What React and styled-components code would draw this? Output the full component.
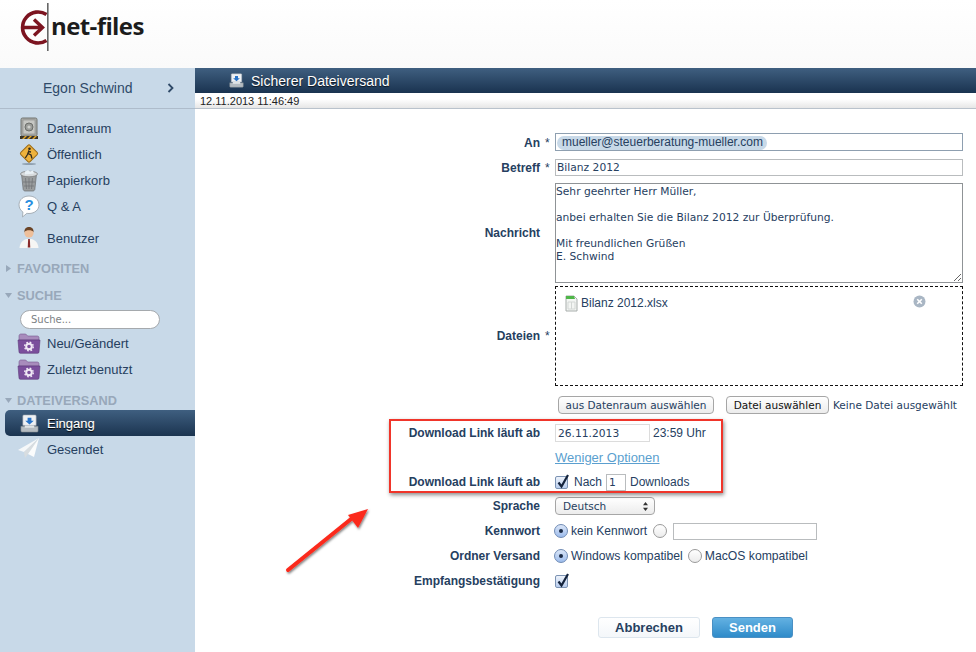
import React from "react";
import styled, { createGlobalStyle } from "styled-components";

const GlobalStyle = createGlobalStyle`
  html, body { margin: 0; padding: 0; background: #fff; }
  body { font-family: "Liberation Sans", Arial, sans-serif; color: #26405f; }
  * { box-sizing: border-box; }
`;

const Page = styled.div`
  width: 976px;
  height: 652px;
  overflow: hidden;
  display: flex;
  flex-direction: column;
  position: relative;
`;

const Header = styled.header`
  height: 68px;
  flex: none;
  background: linear-gradient(#ffffff, #fafafa);
  padding: 3px 0 0 20px;
`;

const LogoWrap = styled.div`
  display: flex;
  align-items: flex-start;
  height: 48px;
`;

const LogoText = styled.span`
  font-family: "Open Sans", sans-serif;
  font-weight: 700;
  font-size: 24px;
  letter-spacing: -0.6px;
  line-height: 46px;
  color: #1c1c1c;
  margin-left: 1px;
`;

const Body = styled.div`
  flex: 1;
  display: flex;
  min-height: 0;
`;

const Sidebar = styled.aside`
  width: 195px;
  flex: none;
  background: #c8d9e8;
  display: flex;
  flex-direction: column;
`;

const UserBar = styled.div`
  height: 41px;
  border-bottom: 1px solid #aebccb;
  display: flex;
  align-items: center;
  padding: 0 0 0 43px;
  font-size: 14px;
  color: #2f4a68;
  margin-bottom: 6px;
`;

const UserName = styled.span`
  width: 124px;
`;

const NavItem = styled.div`
  height: ${(p) => p.$h || 26}px;
  margin-top: ${(p) => p.$mt || 0}px;
  margin-left: 5px;
  padding-left: 13px;
  display: flex;
  align-items: center;
  gap: 7px;
  font-size: 13px;
  color: ${(p) => (p.$active ? "#fff" : "#26405f")};
  text-shadow: ${(p) => (p.$active ? "0 1px 1px #000, 0 0 1px rgba(255,255,255,.6)" : "none")};
  border-radius: ${(p) => (p.$active ? "5px 0 0 5px" : "0")};
  background: ${(p) => (p.$active ? "linear-gradient(#3f5f80, #1b3450)" : "none")};
`;

const NavIcon = styled.span`
  width: 22px;
  flex: none;
  display: flex;
  justify-content: center;
  svg { flex: none; }
`;

const SectionHead = styled.div`
  display: flex;
  align-items: center;
  height: 16px;
  margin-top: ${(p) => p.$mt}px;
  padding-left: 5px;
  gap: 5px;
  font-size: 12.8px;
  font-weight: 700;
  color: #98a8ba;
`;

const SearchBox = styled.input`
  display: block;
  width: 140px;
  height: 19px;
  margin: 7px 0 1px 20px;
  border: 1px solid #a5a9ad;
  border-radius: 10px;
  background: #fff;
  padding: 0 10px;
  font-family: "DejaVu Sans", sans-serif;
  font-size: 10px;
  outline: none;
  &::placeholder { color: #7c8184; opacity: 1; }
`;

const Main = styled.main`
  flex: 1;
  min-width: 0;
  position: relative;
  display: flex;
  flex-direction: column;
`;

const TitleBar = styled.div`
  height: 25px;
  flex: none;
  background: linear-gradient(#3f5f80, #1a3350);
  color: #fff;
  display: flex;
  align-items: center;
  gap: 7px;
  padding-left: 34px;
  font-size: 14px;
  text-shadow: 0 1px 1px rgba(0, 0, 0, 0.7);
`;

const DateBar = styled.div`
  height: 16px;
  flex: none;
  background: linear-gradient(#fff 40%, #e6e6e6);
  border-bottom: 1px solid #b9c2cc;
  padding-left: 5px;
  font-size: 11px;
  line-height: 16px;
  color: #222;
`;

const Form = styled.form`
  padding-top: 24px;
  display: flex;
  flex-direction: column;
`;

const Row = styled.div`
  display: flex;
  align-items: center;
  height: ${(p) => p.$h || 18}px;
  margin-top: ${(p) => p.$mt || 0}px;
`;

const Label = styled.div`
  width: 345px;
  flex: none;
  text-align: right;
  font-size: 12px;
  font-weight: 700;
  color: #26405f;
`;

const Star = styled.div`
  width: 15px;
  flex: none;
  padding-left: 5px;
  font-size: 12px;
  color: #26405f;
`;

const Field = styled.div`
  flex: 1;
  display: flex;
  align-items: ${(p) => p.$align || "center"};
  height: 100%;
  font-size: 12px;
  color: #26405f;
`;

const ToField = styled.div`
  width: 408px;
  height: 18px;
  border: 1px solid #8e9fb0;
  padding: 1px 0 0 1px;
`;

const Chip = styled.span`
  display: inline-block;
  height: 14px;
  line-height: 13px;
  padding: 0 4px 0 5px;
  border-radius: 7px;
  background: #c8d9e8;
  font-size: 12px;
  color: #26405f;
`;

const TextInput = styled.input`
  width: ${(p) => p.$w}px;
  height: ${(p) => p.$h || 18}px;
  border: 1px solid ${(p) => p.$line || "#c4c7c9"};
  background: #fff;
  padding: 0 ${(p) => p.$pad ?? 1}px;
  margin: ${(p) => p.$m || 0};
  font-family: "DejaVu Sans", sans-serif;
  font-size: 10.7px;
  color: #26405f;
  outline: none;
`;

const Message = styled.textarea`
  width: 408px;
  height: 100px;
  border: 1px solid #8f9396;
  padding: 1px 0 0 0;
  font-family: "DejaVu Sans", sans-serif;
  font-size: 10.7px;
  line-height: 13px;
  color: #26405f;
  outline: none;
  resize: both;
  overflow: hidden;
`;

const DropZone = styled.div`
  width: 408px;
  height: 100px;
  border: 1px dashed #111;
  padding: 8px 0 0 9px;
  display: flex;
  align-items: flex-start;
  font-size: 12px;
  color: #26405f;
`;

const FileName = styled.span`
  margin-left: 3px;
  line-height: 17px;
  width: 332px;
`;

const MacButton = styled.button`
  height: 18px;
  width: ${(p) => p.$w}px;
  margin: ${(p) => p.$m || 0};
  padding: 0;
  border: 1px solid #a6a6a6;
  border-radius: 4px;
  background: linear-gradient(#fff, #ececec);
  font-family: "DejaVu Sans", sans-serif;
  font-size: 10.5px;
  color: ${(p) => p.$c || "#26405f"};
`;

const SmallText = styled.span`
  font-family: "DejaVu Sans", sans-serif;
  font-size: 10.5px;
  color: #26405f;
  margin: ${(p) => p.$m || 0};
`;

const PlainText = styled.span`
  font-size: ${(p) => p.$s || 12}px;
  color: #26405f;
  margin: ${(p) => p.$m || 0};
`;

const MoreLink = styled.a`
  font-size: 13px;
  color: #5b9fcf;
  text-decoration: underline;
`;

const CheckBox = styled.span`
  width: 13px;
  height: 13px;
  flex: none;
  position: relative;
  display: inline-block;
  border: 1px solid #7c93b3;
  border-radius: 2px;
  background: linear-gradient(#eef3fb, #b8cdee);
  svg { position: absolute; left: -1px; top: -4px; }
`;

const Radio = styled.span`
  width: 14px;
  height: 14px;
  flex: none;
  display: inline-flex;
  align-items: center;
  justify-content: center;
  margin: ${(p) => p.$m || 0};
  border-radius: 50%;
  border: 1px solid ${(p) => (p.$on ? "#6f8bb5" : "#9a9a9a")};
  background: ${(p) => (p.$on ? "linear-gradient(#dbe6f7, #9dbcec)" : "linear-gradient(#fff, #ececec)")};
  &::after {
    content: "";
    display: ${(p) => (p.$on ? "block" : "none")};
    width: 4px;
    height: 4px;
    border-radius: 50%;
    background: #1b2b45;
  }
`;

const SelectBox = styled.div`
  width: 100px;
  height: 18px;
  border: 1px solid #a6a6a6;
  border-radius: 4px;
  background: linear-gradient(#fff, #ececec);
  display: flex;
  align-items: center;
  justify-content: space-between;
  padding: 0 5px 0 7px;
  font-family: "DejaVu Sans", sans-serif;
  font-size: 10.5px;
  color: #26405f;
`;

const Actions = styled.div`
  display: flex;
  gap: 12px;
  margin: 27px 0 0 403px;
`;

const ActionButton = styled.button`
  width: ${(p) => p.$w}px;
  height: 21px;
  padding: 0;
  border-radius: 3px;
  border: 1px solid ${(p) => (p.$primary ? "#4a90c4" : "#dde6ee")};
  background: ${(p) => (p.$primary ? "linear-gradient(#63b1e2, #2f8bc9)" : "linear-gradient(#fff, #f4f7fa)")};
  color: ${(p) => (p.$primary ? "#fff" : "#26405f")};
  font-family: "Liberation Sans", sans-serif;
  font-size: 13px;
  font-weight: 700;
`;

const Highlight = styled.div`
  position: absolute;
  left: 194px;
  top: 351px;
  width: 334px;
  height: 74px;
  border: 2px solid #f0352a;
  box-shadow: 1px 2px 4px rgba(0, 0, 0, 0.45);
  pointer-events: none;
`;

const ArrowMark = styled.svg`
  position: absolute;
  left: 85px;
  top: 436px;
`;

const Logo = () => (
  <svg width="30" height="48" viewBox="0 0 30 48">
    <path d="M26.5 11.5A15.5 15.5 0 1 0 26.5 37.5" fill="none" stroke="#7c1420" strokeWidth="3.6" />
    <path d="M4 24.5h17M14 16.5l8.5 8-8.5 8" fill="none" stroke="#7c1420" strokeWidth="3.4" />
    <rect x="27" y="0" width="1.6" height="48" fill="#666" />
  </svg>
);

const SafeIcon = () => (
  <svg width="20" height="23" viewBox="0 0 20 23">
    <rect x="2" y="1" width="16" height="18" rx="1.5" fill="#a9aba8" stroke="#737570" />
    <rect x="4" y="3" width="12" height="14" fill="#c6c7c3" stroke="#8b8d89" strokeWidth=".6" />
    <circle cx="10" cy="10" r="4" fill="#9a9c98" stroke="#6c6e6a" />
    <circle cx="10" cy="10" r="1.6" fill="#cfd0cc" />
    <rect x="1" y="19" width="18" height="3" fill="#3a3428" />
    <path d="M3 22l3-3h2l-3 3zM8 22l3-3h2l-3 3zM13 22l3-3h2l-3 3z" fill="#e2a52a" />
  </svg>
);

const SignIcon = () => (
  <svg width="22" height="22" viewBox="0 0 22 22">
    <rect x="4.5" y="4" width="13" height="13" rx="1.5" transform="rotate(45 11 10.5)" fill="#eeb23c" stroke="#9c6c18" />
    <circle cx="11.5" cy="5.8" r="1.3" fill="#2f2a20" />
    <path d="M11 7.5l-1.5 4-2.2 3.5M10 10.5l3 1.5 1 3.5M10 8.5l3 .5" fill="none" stroke="#2f2a20" strokeWidth="1.3" />
    <ellipse cx="11" cy="21" rx="7" ry="1" fill="#8fa0b0" />
  </svg>
);

const TrashIcon = () => (
  <svg width="20" height="23" viewBox="0 0 20 23">
    <path d="M2.5 5h15l-1.7 15.5c-.1.8-1 1.5-2 1.5H6.2c-1 0-1.9-.7-2-1.5z" fill="#9a9d9e" stroke="#6a6d6e" strokeWidth=".7" />
    <ellipse cx="10" cy="5" rx="8.5" ry="2.8" fill="#d6dadc" stroke="#777" strokeWidth=".7" />
    <path d="M6 2.5l3-1.5 2 1.5 3-1 1 3-9 1z" fill="#e9f1f6" />
    <path d="M6.5 9l1 11M10 9v11M13.5 9l-1 11M4 13h12M5 17h10" stroke="#6d7072" strokeWidth=".7" />
  </svg>
);

const QuestionIcon = () => (
  <svg width="22" height="23" viewBox="0 0 22 23">
    <path d="M11 1c5.6 0 10 3.7 10 8.8s-4.4 8.7-10 8.7c-.8 0-1.4 0-2.1-.2L4.500 22l.4-5C2.400 15.300 1 12.800 1 9.800 1 4.700 5.400 1 11 1z" fill="#fff" stroke="#a7b0b8" />
    <text x="11" y="15" textAnchor="middle" fontFamily="Liberation Sans" fontWeight="700" fontSize="15" fill="#2a8fe0">?</text>
  </svg>
);

const UserIcon = () => (
  <svg width="22" height="24" viewBox="0 0 22 24">
    <circle cx="11" cy="7" r="4.6" fill="#eebf9a" />
    <path d="M6.5 6.5C6 2.5 8.5 1 11 1s5 1.5 4.5 5.5C15 4.5 13 4.2 11 4.2S7 4.5 6.5 6.5z" fill="#6b4426" />
    <path d="M1.5 22c.4-5 3-8 7-9h5c4 1 6.6 4 7 9z" fill="#f6f6f4" />
    <path d="M10.2 13h1.600l.5 8.5h-2.600z" fill="#8a2a2a" />
  </svg>
);

const GearFolder = () => (
  <svg width="24" height="22" viewBox="0 0 24 22">
    <path d="M2 4c0-1 .7-2 1.7-2h5l2 2h9.600c1 0 1.700.8 1.700 1.700V8H2z" fill="#a88cbc" stroke="#77598f" strokeWidth=".6" />
    <path d="M1 8h22l-1 12c0 .7-.6 1.300-1.300 1.300H3.300C2.600 21.300 2 20.700 2 20z" fill="#7b4f9c" stroke="#5c3a78" strokeWidth=".6" />
    <circle cx="12" cy="14.5" r="2.8" fill="none" stroke="#f0e8f5" strokeWidth="2" />
    <circle cx="12" cy="14.5" r="4.3" fill="none" stroke="#f0e8f5" strokeWidth="1.4" strokeDasharray="1.7 1.7" />
  </svg>
);

const TrayIcon = ({ size = 20 }) => (
  <svg width={size} height={size} viewBox="0 0 20 20">
    <path d="M4 1h12c.6 0 1 .4 1 1v10H3V2c0-.6.4-1 1-1z" fill="#eef1f4" stroke="#9aa2aa" strokeWidth=".6" />
    <path d="M8 4h4v3h2.500L10 11 5.500 7H8z" fill="#2a74c8" />
    <path d="M1 13h18v5c0 .6-.4 1-1 1H2c-.6 0-1-.4-1-1z" fill="#b4bbc1" stroke="#7f868c" strokeWidth=".6" />
    <path d="M5 12h10v2.500H5z" fill="#dfe3e6" />
  </svg>
);

const PlaneIcon = () => (
  <svg width="24" height="24" viewBox="0 0 24 24">
    <path d="M22 1L1 13l6 2z" fill="#f6f8f9" />
    <path d="M22 1L7 15l1 6 3-4z" fill="#d8dde0" />
    <path d="M22 1L11 17l6 3z" fill="#fbfcfc" />
  </svg>
);

const SheetIcon = () => (
  <svg width="13" height="17" viewBox="0 0 13 17">
    <path d="M1 1h8l3 3v12H1z" fill="#f3f5f3" stroke="#a7adab" />
    <path d="M1 1h8l1 3H1z" fill="#4fb648" />
    <path d="M3 7h7v7H3z" fill="none" stroke="#d3d7d5" />
    <path d="M6.5 7v7" stroke="#d3d7d5" />
  </svg>
);

const RemoveIcon = () => (
  <svg width="13" height="13" viewBox="0 0 13 13">
    <circle cx="6.5" cy="6.5" r="6" fill="#a9b6c4" />
    <path d="M4.2 4.2l4.6 4.6M8.8 4.2l-4.6 4.6" stroke="#fff" strokeWidth="1.6" />
  </svg>
);

const Caret = ({ open }) => (
  <svg width="7" height="7" viewBox="0 0 7 7">
    {open ? <path d="M0 1h7L3.5 6z" fill="#98a8ba" /> : <path d="M1 0l5 3.5L1 7z" fill="#98a8ba" />}
  </svg>
);

const Chevron = () => (
  <svg width="7" height="10" viewBox="0 0 7 10">
    <path d="M1.5 1l4 4-4 4" fill="none" stroke="#2f4a68" strokeWidth="1.8" />
  </svg>
);

const Tick = () => (
  <svg width="15" height="17" viewBox="0 0 15 17">
    <path d="M3.5 9.5l3 4L13 2" fill="none" stroke="#14233c" strokeWidth="2.2" />
  </svg>
);

const Stepper = () => (
  <svg width="7" height="11" viewBox="0 0 7 11">
    <path d="M3.5 1L6 4.2H1zM3.5 10L6 6.8H1z" fill="#333" />
  </svg>
);

const message = `Sehr geehrter Herr Müller,

anbei erhalten Sie die Bilanz 2012 zur Überprüfung.

Mit freundlichen Grüßen
E. Schwind`;

export default function App() {
  return (
    <Page>
      <GlobalStyle />
      <Header>
        <LogoWrap>
          <Logo />
          <LogoText>net-files</LogoText>
        </LogoWrap>
      </Header>
      <Body>
        <Sidebar>
          <UserBar>
            <UserName>Egon Schwind</UserName>
            <Chevron />
          </UserBar>
          <NavItem><NavIcon><SafeIcon /></NavIcon>Datenraum</NavItem>
          <NavItem><NavIcon><SignIcon /></NavIcon>Öffentlich</NavItem>
          <NavItem><NavIcon><TrashIcon /></NavIcon>Papierkorb</NavItem>
          <NavItem><NavIcon><QuestionIcon /></NavIcon>Q &amp; A</NavItem>
          <NavItem $mt={6}><NavIcon><UserIcon /></NavIcon>Benutzer</NavItem>
          <SectionHead $mt={9}><Caret />FAVORITEN</SectionHead>
          <SectionHead $mt={11}><Caret open />SUCHE</SectionHead>
          <SearchBox placeholder="Suche..." readOnly />
          <NavItem><NavIcon><GearFolder /></NavIcon>Neu/Geändert</NavItem>
          <NavItem><NavIcon><GearFolder /></NavIcon>Zuletzt benutzt</NavItem>
          <SectionHead $mt={10}><Caret open />DATEIVERSAND</SectionHead>
          <NavItem $active $mt={2}><NavIcon><TrayIcon size={19} /></NavIcon>Eingang</NavItem>
          <NavItem><NavIcon><PlaneIcon /></NavIcon>Gesendet</NavItem>
        </Sidebar>
        <Main>
          <TitleBar><TrayIcon size={15} />Sicherer Dateiversand</TitleBar>
          <DateBar>12.11.2013 11:46:49</DateBar>
          <Form>
            <Row $h={20}>
              <Label>An</Label><Star>*</Star>
              <Field $align="flex-start"><ToField><Chip>mueller@steuerberatung-mueller.com</Chip></ToField></Field>
            </Row>
            <Row $h={17} $mt={6}>
              <Label>Betreff</Label><Star>*</Star>
              <Field><TextInput $w={408} $h={17} $line="#b9bcbe" defaultValue="Bilanz 2012" readOnly /></Field>
            </Row>
            <Row $h={100} $mt={7}>
              <Label>Nachricht</Label><Star />
              <Field><Message defaultValue={message} readOnly /></Field>
            </Row>
            <Row $h={100} $mt={3}>
              <Label>Dateien</Label><Star>*</Star>
              <Field>
                <DropZone>
                  <SheetIcon />
                  <FileName>Bilanz 2012.xlsx</FileName>
                  <RemoveIcon />
                </DropZone>
              </Field>
            </Row>
            <Row $mt={10}>
              <Label /><Star />
              <Field>
                <MacButton type="button" $w={156} $m="0 0 0 3px">aus Datenraum auswählen</MacButton>
                <MacButton type="button" $w={103} $m="0 0 0 12px" $c="#111">Datei auswählen</MacButton>
                <SmallText $m="0 0 0 4px">Keine Datei ausgewählt</SmallText>
              </Field>
            </Row>
            <Row $mt={10}>
              <Label>Download Link läuft ab</Label><Star />
              <Field>
                <TextInput $w={95} $line="#dcdcdc" $pad={2} defaultValue="26.11.2013" readOnly />
                <PlainText $m="0 0 0 3px">23:59 Uhr</PlainText>
              </Field>
            </Row>
            <Row $mt={6}>
              <Label /><Star />
              <Field><MoreLink>Weniger Optionen</MoreLink></Field>
            </Row>
            <Row $mt={7}>
              <Label>Download Link läuft ab</Label><Star />
              <Field>
                <CheckBox><Tick /></CheckBox>
                <PlainText $m="0 0 0 6px">Nach</PlainText>
                <TextInput $w={20} $h={17} $line="#b9bcbe" $pad={2} $m="0 0 0 4px" defaultValue="1" readOnly />
                <PlainText $m="0 0 0 4px">Downloads</PlainText>
              </Field>
            </Row>
            <Row $mt={6}>
              <Label>Sprache</Label><Star />
              <Field><SelectBox>Deutsch<Stepper /></SelectBox></Field>
            </Row>
            <Row $mt={7}>
              <Label>Kennwort</Label><Star />
              <Field>
                <Radio $on $m="0 0 0 -1px" />
                <PlainText $m="0 0 0 3px">kein Kennwort</PlainText>
                <Radio $m="0 0 0 6px" />
                <TextInput $w={144} $h={17} $line="#b9bcbe" $m="0 0 0 6px" readOnly />
              </Field>
            </Row>
            <Row $mt={7}>
              <Label>Ordner Versand</Label><Star />
              <Field>
                <Radio $on $m="0 0 0 -1px" />
                <PlainText $s={12.2} $m="0 0 0 3px">Windows kompatibel</PlainText>
                <Radio $m="0 0 0 5px" />
                <PlainText $s={12.2} $m="0 0 0 3px">MacOS kompatibel</PlainText>
              </Field>
            </Row>
            <Row $mt={7}>
              <Label>Empfangsbestätigung</Label><Star />
              <Field><CheckBox><Tick /></CheckBox></Field>
            </Row>
            <Actions>
              <ActionButton type="button" $w={102}>Abbrechen</ActionButton>
              <ActionButton type="button" $w={81} $primary>Senden</ActionButton>
            </Actions>
          </Form>
          <Highlight />
          <ArrowMark width="92" height="76" viewBox="0 0 92 76">
            <defs>
              <filter id="arrowShadow" x="-20%" y="-20%" width="140%" height="140%">
                <feDropShadow dx="1" dy="1.5" stdDeviation="1.2" floodColor="#000" floodOpacity=".5" />
              </filter>
            </defs>
            <g filter="url(#arrowShadow)">
              <path d="M8 66L76 11" stroke="#fb2a1c" strokeWidth="4" strokeLinecap="round" />
              <path d="M88 5L68 11 78 24z" fill="#fb2a1c" />
            </g>
          </ArrowMark>
        </Main>
      </Body>
    </Page>
  );
}
